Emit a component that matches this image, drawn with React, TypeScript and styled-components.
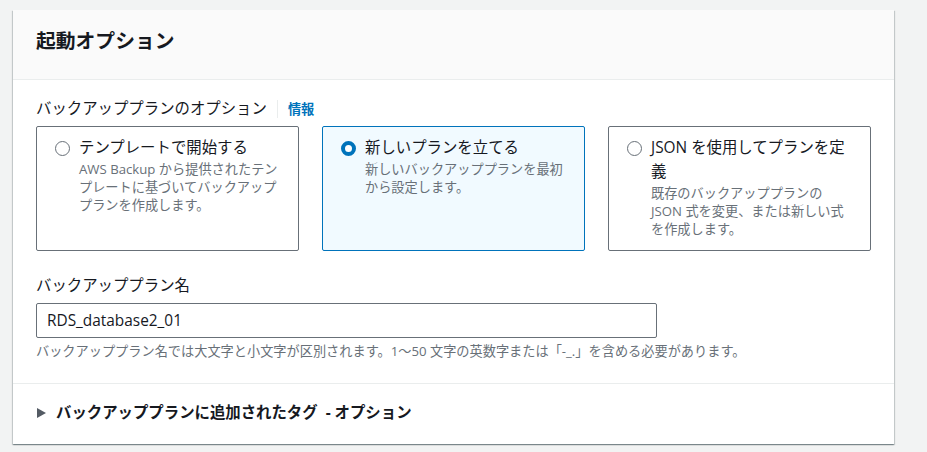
import React from "react";
import styled, { createGlobalStyle } from "styled-components";

const GlobalStyle = createGlobalStyle`
  html, body {
    margin: 0;
    padding: 0;
    background: #f2f3f3;
  }
  body {
    font-family: "Open Sans", "Noto Sans CJK JP", sans-serif;
    color: #16191f;
  }
`;

const Page = styled.div`
  padding: 10px 0 0 13px;
  min-height: 452px;
  box-sizing: border-box;
`;

const Card = styled.section`
  width: 881px;
  background: #ffffff;
  box-shadow: 0 1px 1px 0 rgba(0, 28, 36, 0.3), 1px 1px 1px 0 rgba(0, 28, 36, 0.15),
    -1px 1px 1px 0 rgba(0, 28, 36, 0.15);
`;

const Header = styled.header`
  background: #fafafa;
  border-bottom: 1px solid #eaeded;
  padding: 17px 23px 24px;
`;

const Title = styled.h2`
  margin: 0;
  font-size: 19.8px;
  line-height: 28px;
  font-weight: 700;
  color: #16191f;
`;

const Body = styled.div`
  padding: 18px 23px 23px;
  display: flex;
  flex-direction: column;
  gap: 24px;
  border-bottom: 1px solid #eaeded;
`;

const Field = styled.div`
  display: flex;
  flex-direction: column;
`;

const LabelRow = styled.div`
  display: flex;
  align-items: center;
  font-size: 15.4px;
  line-height: 22px;
  color: #16191f;
  margin-bottom: 6px;
`;

const InfoLink = styled.a`
  display: flex;
  align-items: center;
  font-size: 13.2px;
  font-weight: 700;
  color: #0073bb;
  text-decoration: none;
  margin-left: 10px;

  &::before {
    content: "";
    width: 1px;
    height: 18px;
    background: #eaeded;
    margin-right: 10px;
  }
`;

const Tiles = styled.div`
  display: grid;
  grid-template-columns: repeat(3, 263px);
  gap: 23px;
`;

const Tile = styled.label<{ $selected?: boolean }>`
  display: flex;
  gap: 9px;
  padding: 9px 18px 12px;
  min-height: 124px;
  box-sizing: border-box;
  border: 1px solid ${(p) => (p.$selected ? "#0073bb" : "#687078")};
  background: ${(p) => (p.$selected ? "#f1faff" : "#ffffff")};
  border-radius: 2px;
  cursor: pointer;
`;

const Radio = styled.span<{ $checked?: boolean }>`
  flex: none;
  width: 15px;
  height: 15px;
  box-sizing: border-box;
  margin-top: 5px;
  border-radius: 50%;
  background: #ffffff;
  border: ${(p) => (p.$checked ? "4.5px solid #0073bb" : "1.5px solid #687078")};
`;

const TileText = styled.div`
  display: flex;
  flex-direction: column;
  min-width: 0;
`;

const TileTitle = styled.span`
  font-size: 15.4px;
  line-height: 24px;
  color: #16191f;
`;

const TileDesc = styled.span`
  font-size: 13.2px;
  line-height: 18px;
  color: #687078;
`;

const TextInput = styled.input`
  width: 621px;
  height: 35px;
  box-sizing: border-box;
  padding: 0 10px;
  border: 1px solid #687078;
  border-radius: 2px;
  font-family: inherit;
  font-size: 15.4px;
  color: #16191f;
  background: #ffffff;
  outline: none;
`;

const Hint = styled.div`
  margin-top: 4px;
  font-size: 13.2px;
  line-height: 18px;
  color: #687078;
`;

const Expander = styled.div`
  display: flex;
  align-items: center;
  gap: 10px;
  padding: 18px 23px 20px 24px;
  font-size: 15.4px;
  line-height: 22px;
  font-weight: 700;
  color: #16191f;
  white-space: pre;
  cursor: pointer;
`;

const Caret = styled.svg`
  width: 9px;
  height: 10px;
  flex: none;
`;

const options = [
  {
    title: "テンプレートで開始する",
    desc: "AWS Backup から提供されたテンプレートに基づいてバックアッププランを作成します。",
  },
  {
    title: "新しいプランを立てる",
    desc: "新しいバックアッププランを最初から設定します。",
    selected: true,
  },
  {
    title: "JSON を使用してプランを定義",
    desc: "既存のバックアッププランの JSON 式を変更、または新しい式を作成します。",
  },
];

const App = () => {
  return (
    <Page>
      <GlobalStyle />
      <Card>
        <Header>
          <Title>起動オプション</Title>
        </Header>
        <Body>
          <Field>
            <LabelRow>
              バックアッププランのオプション
              <InfoLink href="#">情報</InfoLink>
            </LabelRow>
            <Tiles>
              {options.map((o) => (
                <Tile key={o.title} $selected={o.selected}>
                  <Radio $checked={o.selected} />
                  <TileText>
                    <TileTitle>{o.title}</TileTitle>
                    <TileDesc>{o.desc}</TileDesc>
                  </TileText>
                </Tile>
              ))}
            </Tiles>
          </Field>
          <Field>
            <LabelRow>バックアッププラン名</LabelRow>
            <TextInput defaultValue="RDS_database2_01" />
            <Hint>
              バックアッププラン名では大文字と小文字が区別されます。1～50 文字の英数字または「-_.」を含める必要があります。
            </Hint>
          </Field>
        </Body>
        <Expander>
          <Caret viewBox="0 0 9 10">
            <path d="M0 0 L9 5 L0 10 Z" fill="#545b64" />
          </Caret>
          {"バックアッププランに追加されたタグ  - オプション"}
        </Expander>
      </Card>
    </Page>
  );
};

export default App;
